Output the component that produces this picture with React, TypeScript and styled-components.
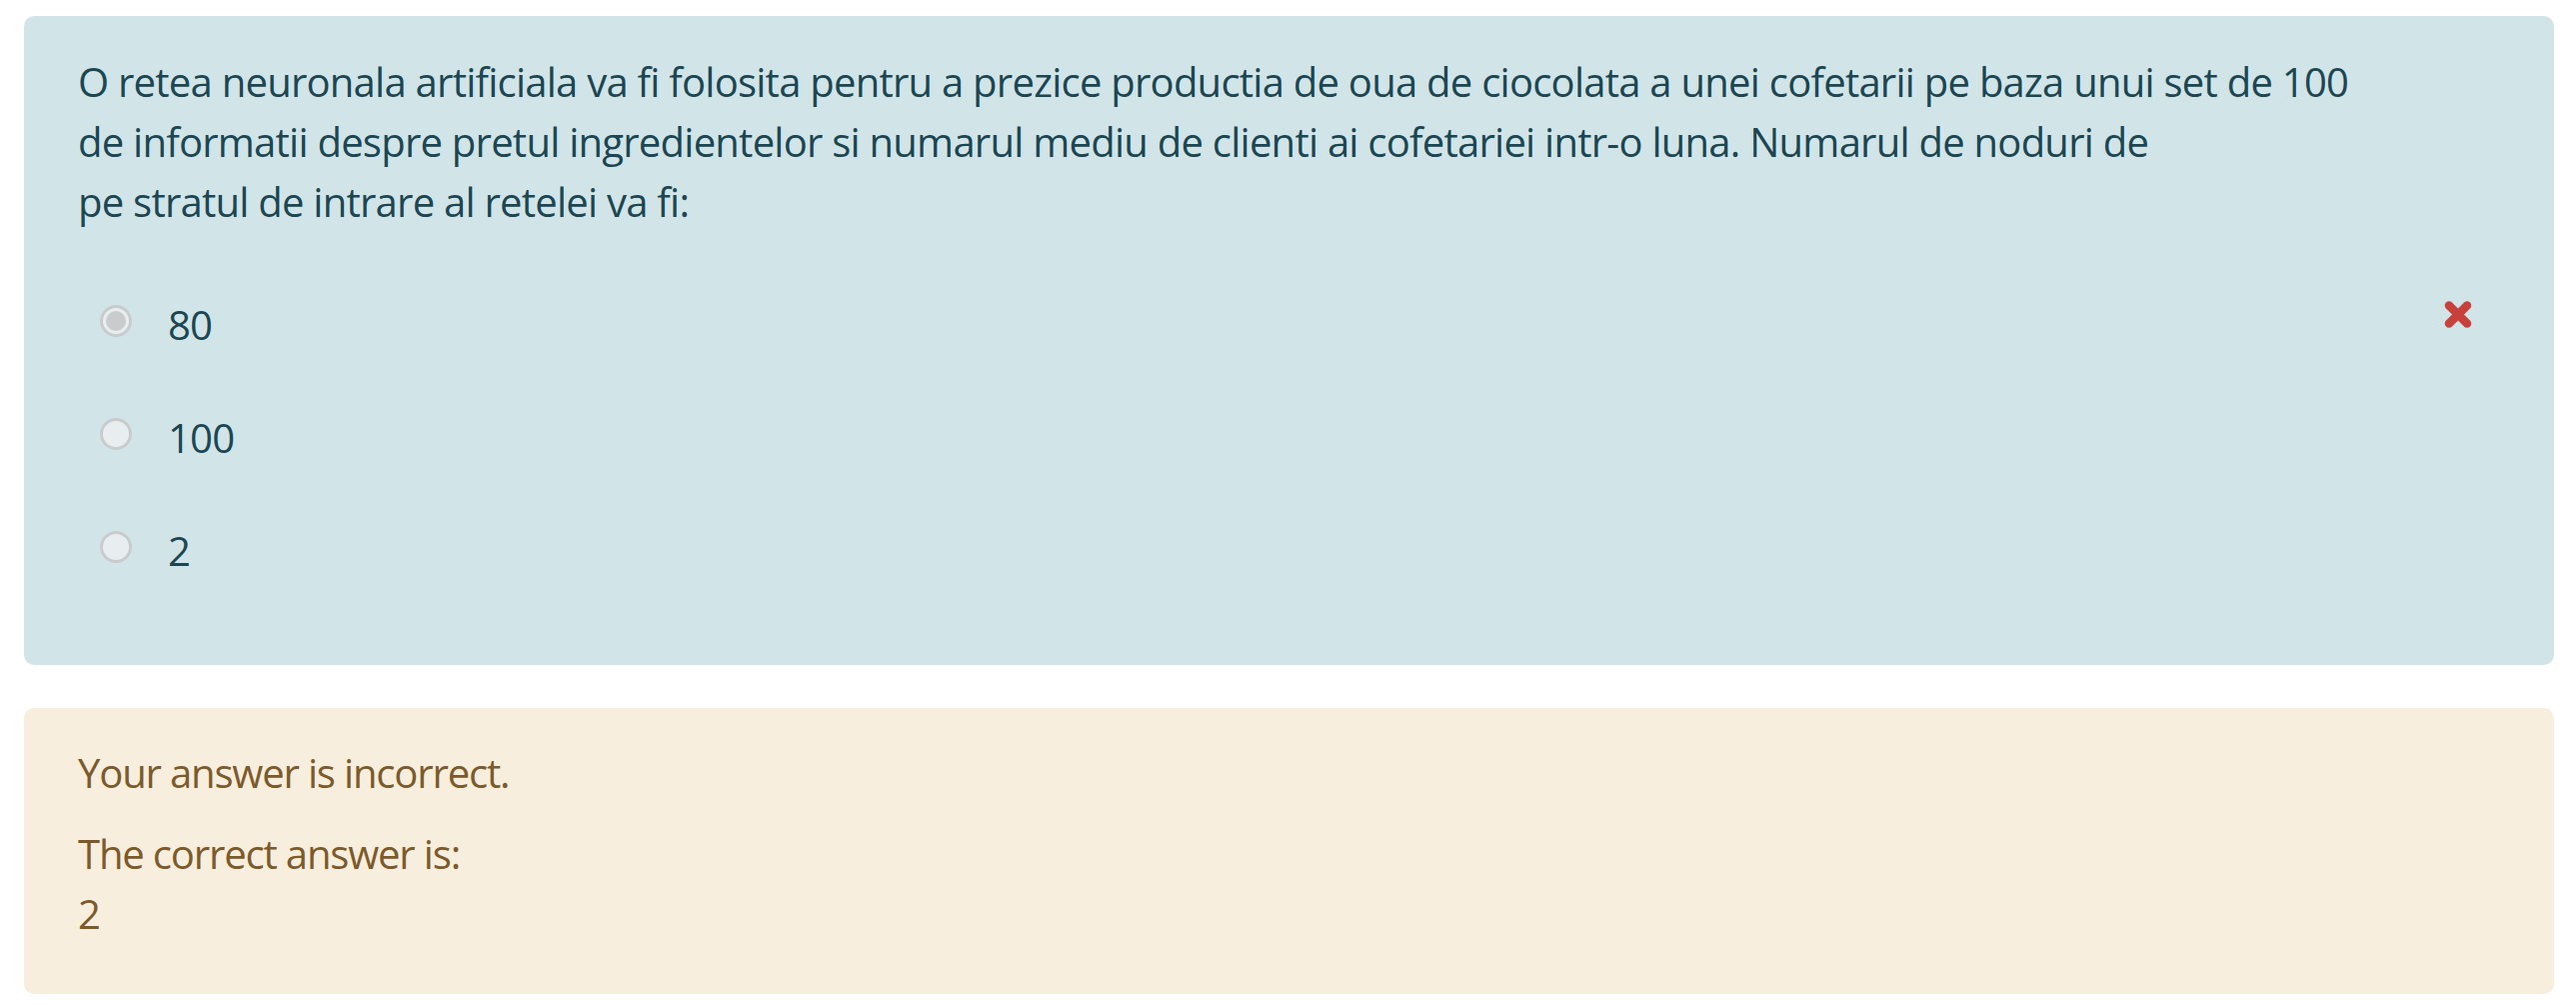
import React from "react";
import styled, { createGlobalStyle } from "styled-components";

const GlobalStyle = createGlobalStyle`
  html, body { margin: 0; padding: 0; background: #ffffff; }
  body { font-family: "Open Sans", "Noto Sans", sans-serif; }
`;

const Page = styled.div`
  padding: 16px 22px 0 24px;
  display: flex;
  flex-direction: column;
  gap: 43px;
`;

const Panel = styled.div<{ $tone: "info" | "warn" }>`
  border-radius: 10px;
  background: ${(p) => (p.$tone === "info" ? "#d1e5e9" : "#f7eedd")};
  color: ${(p) => (p.$tone === "info" ? "#1b4652" : "#7b5a2c")};
  font-size: 40px;
  line-height: 60px;
  letter-spacing: ${(p) => (p.$tone === "info" ? "-0.75px" : "-1.15px")};
`;

const Formulation = styled(Panel)`
  padding: 36px 54px 57px 54px;
`;

const Feedback = styled(Panel)`
  padding: 35px 54px 50px 54px;
`;

const QText = styled.div`
  margin-bottom: 37px;
`;

const Options = styled.div`
  display: flex;
  flex-direction: column;
`;

const OptionRow = styled.div`
  display: flex;
  align-items: flex-start;
  height: 113px;
  padding-top: 26px;
  box-sizing: border-box;
`;

const Radio = styled.span<{ $checked?: boolean }>`
  position: relative;
  flex: none;
  width: 32px;
  height: 32px;
  box-sizing: border-box;
  margin: 10px 0 0 22px;
  border-radius: 50%;
  border: 3px solid #c9cbcc;
  background: #e8eef0;
  &::after {
    content: "";
    position: absolute;
    inset: 3px;
    border-radius: 50%;
    background: ${(p) => (p.$checked ? "#c9cbcc" : "transparent")};
  }
`;

const Label = styled.span`
  margin-left: 36px;
`;

const Mark = styled.svg`
  flex: none;
  margin-left: auto;
  margin-right: 28px;
  margin-top: 5px;
  width: 28px;
  height: 29px;
  color: #c7403b;
`;

const Para = styled.p`
  margin: 0 0 21px 0;
  &:last-child { margin-bottom: 0; }
`;

function WrongMark() {
  return (
    <Mark viewBox="0 0 28 29" aria-hidden="true">
      <g stroke="currentColor" strokeWidth="8.5" strokeLinecap="round">
        <line x1="5" y1="5.5" x2="23" y2="23.5" />
        <line x1="23" y1="5.5" x2="5" y2="23.5" />
      </g>
    </Mark>
  );
}

export default function App() {
  const options = [
    { label: "80", checked: true, wrong: true },
    { label: "100", checked: false, wrong: false },
    { label: "2", checked: false, wrong: false },
  ];
  return (
    <>
      <GlobalStyle />
      <Page>
        <Formulation $tone="info">
          <QText>
            O retea neuronala artificiala va fi folosita pentru a prezice productia de oua de ciocolata a unei cofetarii pe baza unui set de 100
            <br />
            de informatii despre pretul ingredientelor si numarul mediu de clienti ai cofetariei intr-o luna. Numarul de noduri de
            <br />
            pe stratul de intrare al retelei va fi:
          </QText>
          <Options>
            {options.map((o) => (
              <OptionRow key={o.label}>
                <Radio $checked={o.checked} />
                <Label>{o.label}</Label>
                {o.wrong && <WrongMark />}
              </OptionRow>
            ))}
          </Options>
        </Formulation>
        <Feedback $tone="warn">
          <Para>Your answer is incorrect.</Para>
          <Para>
            The correct answer is:
            <br />2
          </Para>
        </Feedback>
      </Page>
    </>
  );
}
